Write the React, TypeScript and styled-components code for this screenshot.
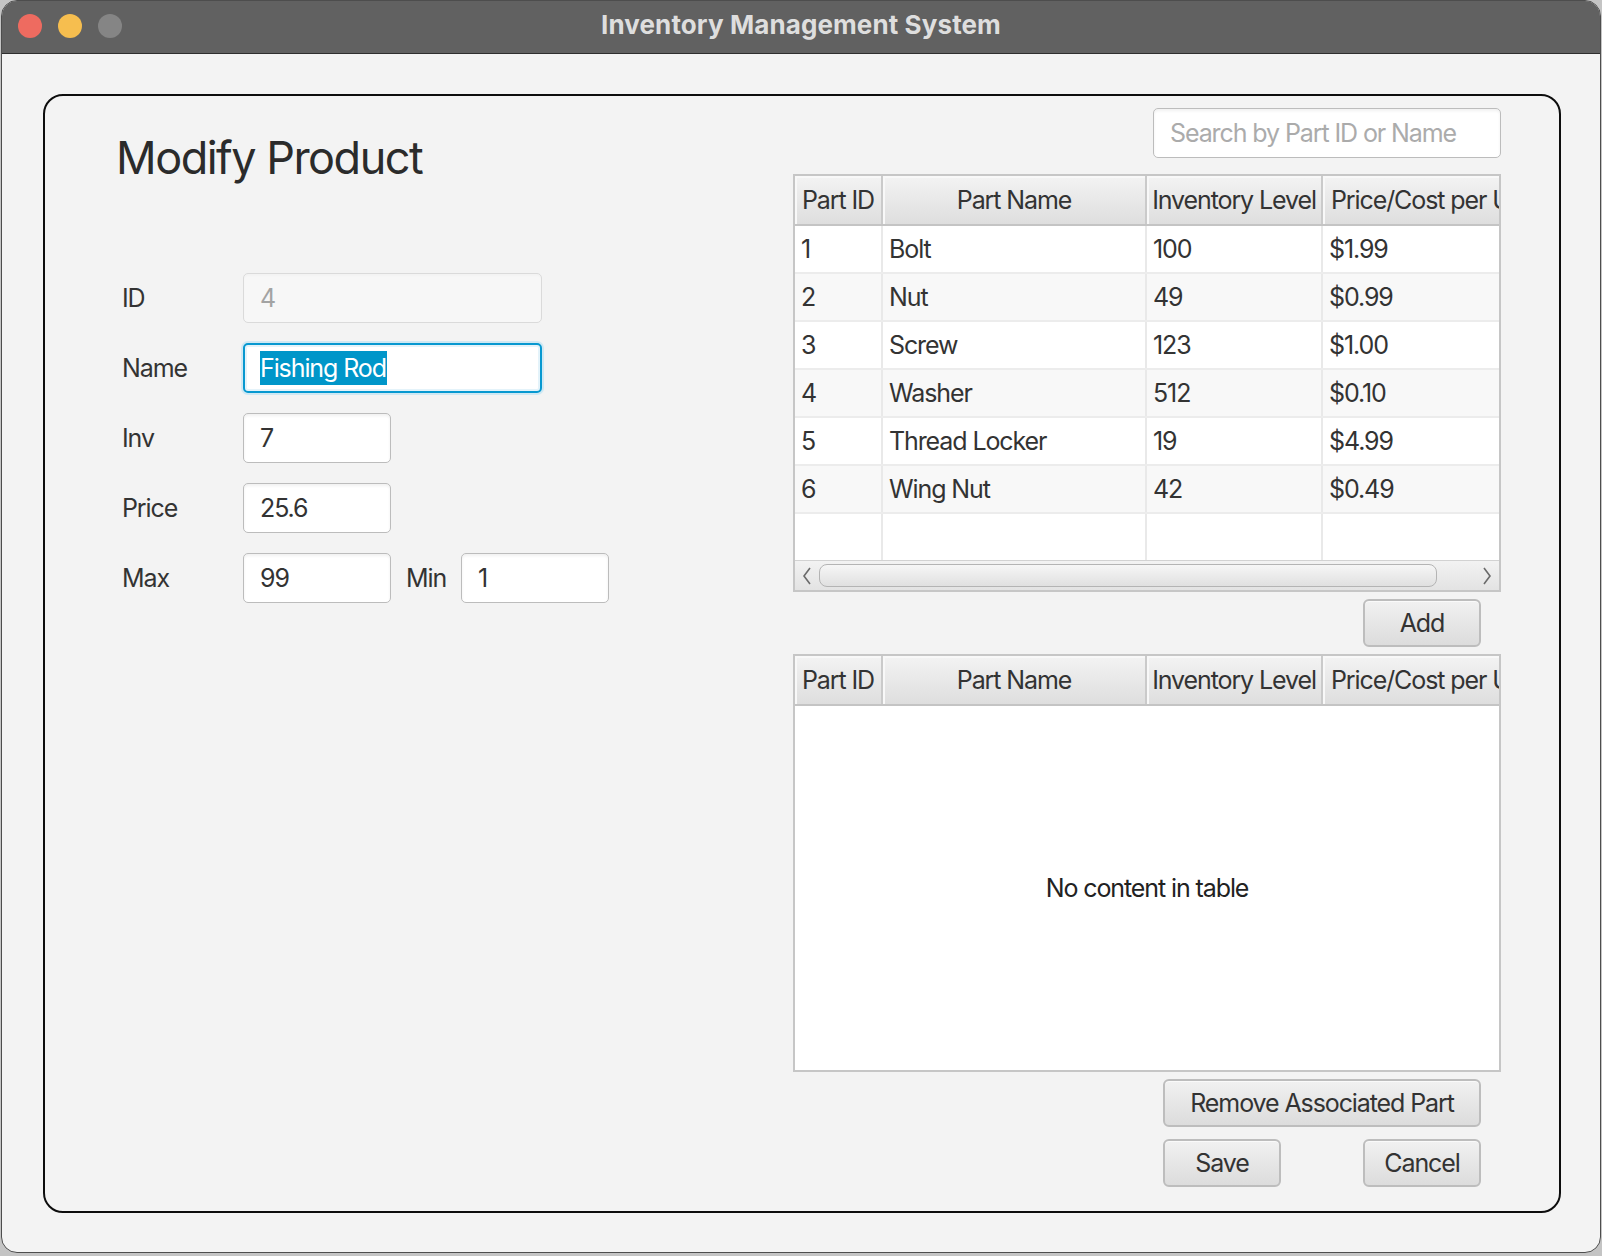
import React from "react";
import styled, { createGlobalStyle, css } from "styled-components";

const FONT = `Inter, "Liberation Sans", "DejaVu Sans", sans-serif`;

const text = css`
  font-family: ${FONT};
  font-size: 25px;
  letter-spacing: -1.1px;
`;

const Global = createGlobalStyle`
  html, body {
    margin: 0;
    padding: 0;
    background: #c4c4c4;
  }
  body {
    width: 1602px;
    height: 1256px;
    overflow: hidden;
    font-family: ${FONT};
    color: #333;
  }
  * { box-sizing: border-box; }
`;

const Window = styled.div`
  margin-left: 1px;
  width: 1600px;
  height: 1253px;
  border: 1px solid #4d4d4d;
  border-radius: 16px;
  overflow: hidden;
  background: #f3f3f3;
  display: flex;
  flex-direction: column;
`;

const TitleBar = styled.div`
  height: 53px;
  flex: none;
  background: #616161;
  border-bottom: 1px solid #2e2e2e;
  display: grid;
  grid-template-columns: 1fr auto 1fr;
  align-items: center;
  padding-left: 16px;
`;

const Lights = styled.div`
  display: flex;
  gap: 16px;
  align-items: center;
  margin-top: -2px;
`;

const Light = styled.span<{ $c: string }>`
  width: 24px;
  height: 24px;
  border-radius: 50%;
  background: ${(p) => p.$c};
`;

const WindowTitle = styled.div`
  font-family: ${FONT};
  font-weight: 700;
  font-size: 26px;
  color: #dedede;
  letter-spacing: 0.1px;
  margin-top: -6px;
  margin-left: -16px;
`;

const Content = styled.div`
  flex: 1;
  display: flex;
  padding: 40px 39px 39px 41px;
  min-height: 0;
`;

const Panel = styled.div`
  flex: 1;
  display: flex;
  border: 2px solid #0d0d0d;
  border-radius: 20px;
  padding: 12px 58px 23px 77px;
`;

const LeftColumn = styled.div`
  flex: 1;
  display: flex;
  flex-direction: column;
  padding-top: 26px;
`;

const PageTitle = styled.h1`
  margin: 0 0 0 -6px;
  font-family: ${FONT};
  font-weight: 400;
  font-size: 45px;
  line-height: 48px;
  color: #2b2b2b;
  letter-spacing: -1.5px;
`;

const Form = styled.div`
  margin-top: 91px;
  display: grid;
  grid-template-columns: 121px auto;
  grid-auto-rows: 50px;
  row-gap: 20px;
  align-items: center;
`;

const Label = styled.span`
  ${text};
  color: #333;
`;

const Inline = styled.div`
  display: flex;
  align-items: center;
  gap: 15px;
`;

const Field = styled.div<{ $w: number; $disabled?: boolean; $focused?: boolean }>`
  width: ${(p) => p.$w}px;
  height: 50px;
  display: flex;
  align-items: center;
  padding-left: 16px;
  ${text};
  border-radius: 5px;
  background: ${(p) => (p.$disabled ? "#f7f7f7" : "#fff")};
  color: ${(p) => (p.$disabled ? "#a3a3a3" : "#333")};
  border: ${(p) =>
    p.$focused
      ? "2px solid #0798d0"
      : p.$disabled
      ? "1.5px solid #dadada"
      : "1.5px solid #bcbcbc"};
  box-shadow: ${(p) =>
    p.$focused
      ? "0 0 0 2px #cfe8f3, inset 0 0 0 2px #e4f3fa"
      : p.$disabled
      ? "inset 0 2px 2px rgba(0,0,0,0.02)"
      : "inset 0 2px 3px rgba(0,0,0,0.06)"};
`;

const Selection = styled.span`
  background: #0096c9;
  color: #fff;
  height: 34px;
  line-height: 34px;
  padding-right: 1px;
  margin-left: -1px;
`;

const Placeholder = styled.span`
  color: #ababab;
`;

const RightColumn = styled.div`
  width: 708px;
  flex: none;
  display: flex;
  flex-direction: column;
`;

const Table = styled.div<{ $mt: number }>`
  margin-top: ${(p) => p.$mt}px;
  height: 418px;
  flex: none;
  border: 2px solid #c6c6c6;
  background: #fff;
  display: flex;
  flex-direction: column;
  overflow: hidden;
`;

const COLS = "88px 264px 176px 200px";

const HeaderRow = styled.div`
  height: 50px;
  flex: none;
  display: grid;
  grid-template-columns: ${COLS};
  background: linear-gradient(#f3f3f3, #dedede);
  border-bottom: 2px solid #c4c4c4;
`;

const HeaderCell = styled.div`
  display: flex;
  align-items: center;
  justify-content: center;
  overflow: hidden;
  white-space: nowrap;
  ${text};
  color: #333;
  border-right: 2px solid #cacaca;
  box-shadow: inset 2px 2px 0 #f8f8f8;
  &:last-child {
    justify-content: flex-start;
    padding-left: 8px;
  }
`;

const Body = styled.div`
  flex: 1;
  display: flex;
  flex-direction: column;
  min-height: 0;
`;

const Row = styled.div<{ $alt?: boolean; $fill?: boolean }>`
  height: ${(p) => (p.$fill ? "auto" : "48px")};
  flex: ${(p) => (p.$fill ? "1" : "none")};
  display: grid;
  grid-template-columns: ${COLS};
  background: ${(p) => (p.$alt ? "#f8f8f8" : "#fff")};
  border-bottom: ${(p) => (p.$fill ? "none" : "2px solid #ececec")};
`;

const Cell = styled.div`
  display: flex;
  align-items: center;
  padding-left: 6px;
  overflow: hidden;
  white-space: nowrap;
  ${text};
  color: #333;
  border-right: 2px solid #e9e9e9;
`;

const ScrollBar = styled.div`
  height: 30px;
  flex: none;
  display: flex;
  align-items: center;
  background: linear-gradient(#f2f2f2, #e3e3e3);
  border-top: 1px solid #d2d2d2;
`;

const Arrow = styled.div`
  width: 24px;
  height: 100%;
  flex: none;
  display: flex;
  align-items: center;
  justify-content: center;
`;

const Thumb = styled.div`
  width: 618px;
  height: 23px;
  flex: none;
  border: 1.5px solid #b4b4b4;
  border-radius: 8px;
  background: linear-gradient(#f6f6f6, #e0e0e0);
`;

const Spacer = styled.div`
  flex: 1;
`;

const EmptyBody = styled.div`
  flex: 1;
  display: flex;
  align-items: center;
  justify-content: center;
  ${text};
  color: #222;
  background: #fff;
`;

const Button = styled.button<{ $w: number }>`
  width: ${(p) => p.$w}px;
  height: 48px;
  padding: 0;
  ${text};
  color: #333;
  border: 2px solid #bdbdbd;
  border-radius: 6px;
  background: linear-gradient(#f1f1f1, #dcdcdc);
  box-shadow: inset 0 1px 0 #fafafa;
  cursor: pointer;
`;

const RightAligned = styled.div<{ $mt: number; $pr?: number }>`
  margin-top: ${(p) => p.$mt}px;
  display: flex;
  justify-content: flex-end;
  padding-right: ${(p) => p.$pr ?? 20}px;
`;

const ButtonPair = styled.div`
  width: 318px;
  display: flex;
  justify-content: space-between;
`;

const Chevron = ({ dir }: { dir: "left" | "right" }) => (
  <svg width="10" height="18" viewBox="0 0 10 18">
    <path
      d={dir === "left" ? "M8 1 L2 9 L8 17" : "M2 1 L8 9 L2 17"}
      fill="none"
      stroke="#6a6a6a"
      strokeWidth="1.6"
    />
  </svg>
);

const parts = [
  { id: 1, name: "Bolt", inv: 100, price: "$1.99" },
  { id: 2, name: "Nut", inv: 49, price: "$0.99" },
  { id: 3, name: "Screw", inv: 123, price: "$1.00" },
  { id: 4, name: "Washer", inv: 512, price: "$0.10" },
  { id: 5, name: "Thread Locker", inv: 19, price: "$4.99" },
  { id: 6, name: "Wing Nut", inv: 42, price: "$0.49" },
];

const headers = ["Part ID", "Part Name", "Inventory Level", "Price/Cost per Unit"];

const TableHeader = () => (
  <HeaderRow>
    {headers.map((h) => (
      <HeaderCell key={h}>{h}</HeaderCell>
    ))}
  </HeaderRow>
);

export default function App() {
  return (
    <>
      <Global />
      <Window>
        <TitleBar>
          <Lights>
            <Light $c="#ee6b60" />
            <Light $c="#f6be4f" />
            <Light $c="#858585" />
          </Lights>
          <WindowTitle>Inventory Management System</WindowTitle>
          <span />
        </TitleBar>
        <Content>
          <Panel>
            <LeftColumn>
              <PageTitle>Modify Product</PageTitle>
              <Form>
                <Label>ID</Label>
                <Field $w={299} $disabled>4</Field>
                <Label>Name</Label>
                <Field $w={299} $focused>
                  <Selection>Fishing Rod</Selection>
                </Field>
                <Label>Inv</Label>
                <Field $w={148}>7</Field>
                <Label>Price</Label>
                <Field $w={148}>25.6</Field>
                <Label>Max</Label>
                <Inline>
                  <Field $w={148}>99</Field>
                  <Label>Min</Label>
                  <Field $w={148}>1</Field>
                </Inline>
              </Form>
            </LeftColumn>
            <RightColumn>
              <RightAligned $mt={0} $pr={0}>
                <Field $w={348}>
                  <Placeholder>Search by Part ID or Name</Placeholder>
                </Field>
              </RightAligned>
              <Table $mt={16}>
                <TableHeader />
                <Body>
                  {parts.map((p, i) => (
                    <Row key={p.id} $alt={i % 2 === 1}>
                      <Cell>{p.id}</Cell>
                      <Cell>{p.name}</Cell>
                      <Cell>{p.inv}</Cell>
                      <Cell>{p.price}</Cell>
                    </Row>
                  ))}
                  <Row $fill>
                    <Cell />
                    <Cell />
                    <Cell />
                    <Cell />
                  </Row>
                </Body>
                <ScrollBar>
                  <Arrow>
                    <Chevron dir="left" />
                  </Arrow>
                  <Thumb />
                  <Spacer />
                  <Arrow>
                    <Chevron dir="right" />
                  </Arrow>
                </ScrollBar>
              </Table>
              <RightAligned $mt={7}>
                <Button $w={118}>Add</Button>
              </RightAligned>
              <Table $mt={7}>
                <TableHeader />
                <EmptyBody>No content in table</EmptyBody>
              </Table>
              <RightAligned $mt={7}>
                <Button $w={318}>Remove Associated Part</Button>
              </RightAligned>
              <RightAligned $mt={12}>
                <ButtonPair>
                  <Button $w={118}>Save</Button>
                  <Button $w={118}>Cancel</Button>
                </ButtonPair>
              </RightAligned>
            </RightColumn>
          </Panel>
        </Content>
      </Window>
    </>
  );
}
